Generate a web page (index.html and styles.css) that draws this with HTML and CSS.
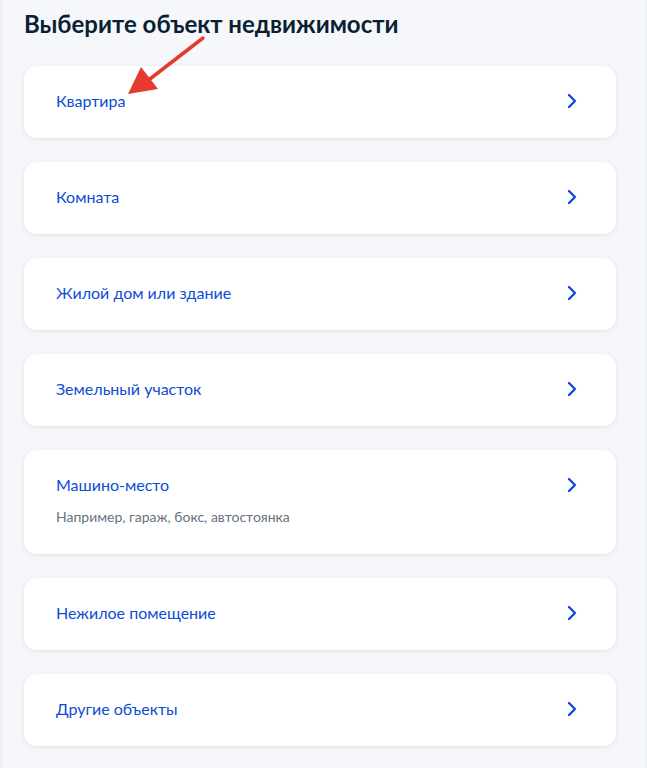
FILE: index.html
```html
<!DOCTYPE html>
<html lang="ru">
<head>
<meta charset="utf-8">
<title>Выберите объект недвижимости</title>
<link rel="stylesheet" href="styles.css">
</head>
<body>
<main class="page">
  <h1 class="title">Выберите объект недвижимости</h1>
  <ul class="list">
    <li class="card"><div class="card-text"><span class="card-title">Квартира</span></div><svg class="chev" viewBox="0 0 10 16"><path d="M2 2l6 6-6 6"/></svg></li>
    <li class="card"><div class="card-text"><span class="card-title">Комната</span></div><svg class="chev" viewBox="0 0 10 16"><path d="M2 2l6 6-6 6"/></svg></li>
    <li class="card"><div class="card-text"><span class="card-title">Жилой дом или здание</span></div><svg class="chev" viewBox="0 0 10 16"><path d="M2 2l6 6-6 6"/></svg></li>
    <li class="card"><div class="card-text"><span class="card-title">Земельный участок</span></div><svg class="chev" viewBox="0 0 10 16"><path d="M2 2l6 6-6 6"/></svg></li>
    <li class="card card-tall"><div class="card-text"><span class="card-title">Машино-место</span><span class="card-sub">Например, гараж, бокс, автостоянка</span></div><svg class="chev" viewBox="0 0 10 16"><path d="M2 2l6 6-6 6"/></svg></li>
    <li class="card"><div class="card-text"><span class="card-title">Нежилое помещение</span></div><svg class="chev" viewBox="0 0 10 16"><path d="M2 2l6 6-6 6"/></svg></li>
    <li class="card"><div class="card-text"><span class="card-title">Другие объекты</span></div><svg class="chev" viewBox="0 0 10 16"><path d="M2 2l6 6-6 6"/></svg></li>
  </ul>
  <svg class="arrow" viewBox="0 0 647 768" aria-hidden="true">
    <line x1="203" y1="38" x2="146" y2="82"/>
    <polygon points="128,94 141,67 158,89"/>
  </svg>
</main>
</body>
</html>
```
FILE: styles.css
```css
html, body {
  margin: 0;
  padding: 0;
  background: #f5f7fa;
}
body {
  font-family: Lato, "Noto Sans", sans-serif;
  min-height: 768px;
  border-left: 2px solid #eceff4;
  box-sizing: border-box;
}
.page {
  position: relative;
  padding: 0 29px 0 22px;
  min-height: 768px;
  border-right: 2px solid #eef1f6;
}
.title {
  margin: 0;
  padding: 8px 0 26px;
  font-size: 24px;
  line-height: 32px;
  font-weight: 700;
  color: #0b1f33;
}
.list {
  list-style: none;
  margin: 0;
  padding: 0;
  display: flex;
  flex-direction: column;
  gap: 24px;
}
.card {
  background: #fff;
  border-radius: 12px;
  box-shadow: 0 1px 4px rgba(176, 190, 210, 0.35);
  padding: 23px 39px 25px 32px;
  display: flex;
  justify-content: space-between;
  align-items: flex-start;
}
.card-tall {
  padding-bottom: 27px;
}
.card-text {
  display: flex;
  flex-direction: column;
}
.card-title {
  font-size: 16px;
  line-height: 24px;
  color: #0d4cd3;
}
.card-sub {
  margin-top: 10px;
  font-size: 14px;
  line-height: 20px;
  color: #66727f;
}
.chev {
  width: 10px;
  height: 16px;
  margin-top: 4px;
  fill: none;
  stroke: #0d4cd3;
  stroke-width: 2.4;
  stroke-linecap: round;
  stroke-linejoin: round;
}
.arrow {
  position: absolute;
  left: -2px;
  top: 0;
  width: 647px;
  height: 768px;
  pointer-events: none;
}
.arrow line {
  stroke: #e53a2e;
  stroke-width: 3.5;
  stroke-linecap: round;
}
.arrow polygon {
  fill: #e53a2e;
}
```
